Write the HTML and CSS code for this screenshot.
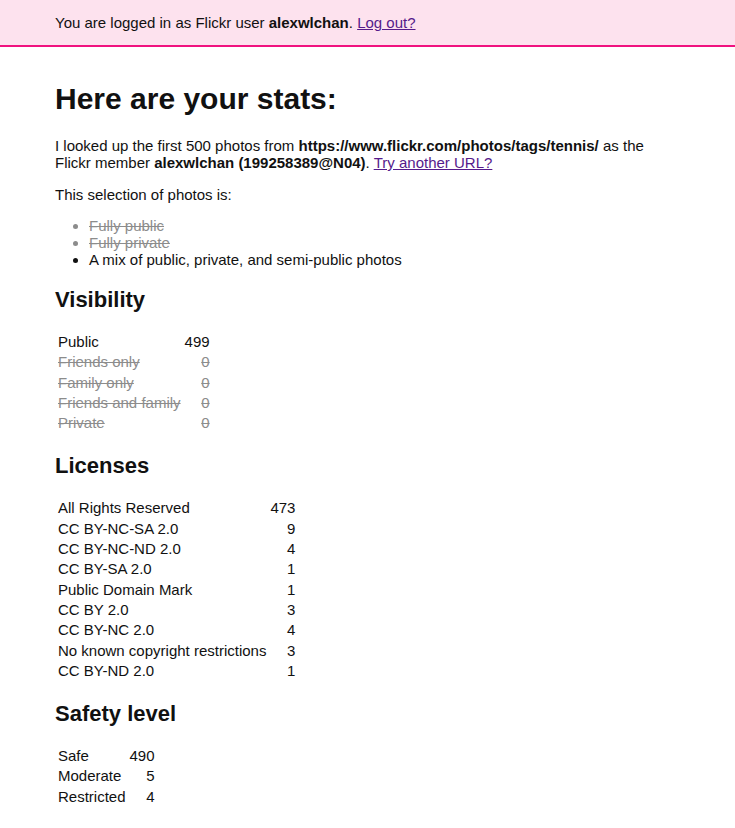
FILE: index.html
```html
<!DOCTYPE html>
<html>
<head>
<meta charset="utf-8">
<title>Flickr stats</title>
<link rel="stylesheet" href="styles.css">
</head>
<body>
<header class="banner">
  <div class="wrap">You are logged in as Flickr user <strong>alexwlchan</strong>. <a href="#">Log out?</a></div>
</header>
<main class="wrap">
  <h1>Here are your stats:</h1>
  <p>I looked up the first 500 photos from <strong>https://www.flickr.com/photos/tags/tennis/</strong> as the Flickr member <strong>alexwlchan (199258389@N04)</strong>. <a href="#">Try another URL?</a></p>
  <p class="lead">This selection of photos is:</p>
  <ul class="kinds">
    <li class="off">Fully public</li>
    <li class="off">Fully private</li>
    <li>A mix of public, private, and semi-public photos</li>
  </ul>

  <h2>Visibility</h2>
  <table class="stats">
    <tr><td>Public</td><td class="num">499</td></tr>
    <tr class="off"><td>Friends only</td><td class="num">0</td></tr>
    <tr class="off"><td>Family only</td><td class="num">0</td></tr>
    <tr class="off"><td>Friends and family</td><td class="num">0</td></tr>
    <tr class="off"><td>Private</td><td class="num">0</td></tr>
  </table>

  <h2>Licenses</h2>
  <table class="stats">
    <tr><td>All Rights Reserved</td><td class="num">473</td></tr>
    <tr><td>CC BY-NC-SA 2.0</td><td class="num">9</td></tr>
    <tr><td>CC BY-NC-ND 2.0</td><td class="num">4</td></tr>
    <tr><td>CC BY-SA 2.0</td><td class="num">1</td></tr>
    <tr><td>Public Domain Mark</td><td class="num">1</td></tr>
    <tr><td>CC BY 2.0</td><td class="num">3</td></tr>
    <tr><td>CC BY-NC 2.0</td><td class="num">4</td></tr>
    <tr><td>No known copyright restrictions</td><td class="num">3</td></tr>
    <tr><td>CC BY-ND 2.0</td><td class="num">1</td></tr>
  </table>

  <h2>Safety level</h2>
  <table class="stats">
    <tr><td>Safe</td><td class="num">490</td></tr>
    <tr><td>Moderate</td><td class="num">5</td></tr>
    <tr><td>Restricted</td><td class="num">4</td></tr>
  </table>
</main>
</body>
</html>
```
FILE: styles.css
```css
html, body {
  margin: 0;
  padding: 0;
  background: #fff;
  color: #111;
  font-family: "Liberation Sans", Arial, Helvetica, sans-serif;
  font-size: 15px;
  line-height: 17px;
}
.wrap {
  padding: 0 55px;
}
.banner {
  background: #fde2ee;
  border-bottom: 2px solid #f0127f;
  padding: 14px 0 14px;
  line-height: 17px;
}
a {
  color: #551a8b;
}
h1 {
  font-size: 30px;
  line-height: 34px;
  margin: 35px 0 21px;
}
h2 {
  font-size: 22px;
  line-height: 25px;
  margin: 19px 0 19px;
}
p {
  margin: 0 0 15px;
}
p.lead {
  margin-bottom: 14px;
}
.kinds {
  margin: 0;
  padding-left: 34px;
}
.kinds li.off {
  color: #8c8c8c;
  text-decoration: line-through;
}
.stats {
  border-collapse: separate;
  border-spacing: 2px;
  margin: 0;
}
.stats td {
  padding: 0 1px;
  line-height: 18.3px;
}
.stats td.num {
  text-align: right;
}
.stats tr.off td {
  color: #8c8c8c;
  text-decoration: line-through;
}
```
